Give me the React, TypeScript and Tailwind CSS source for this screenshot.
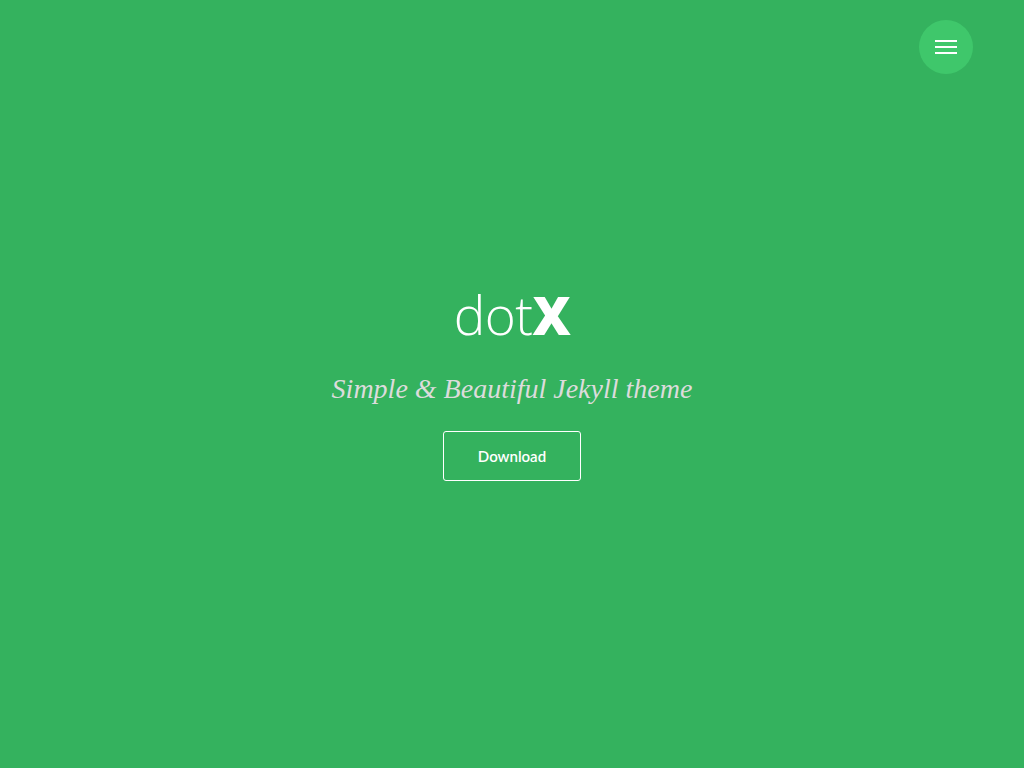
export default function App() {
  return (
    <div className="relative min-h-[768px] w-full bg-[#34b25e] flex flex-col items-center justify-center">
      <button
        aria-label="Menu"
        className="absolute top-[20px] right-[51px] w-[54px] h-[54px] rounded-full bg-[#3fc76b] flex flex-col items-center justify-center gap-[4px]"
      >
        <span className="block w-[22px] h-[2px] bg-white" />
        <span className="block w-[22px] h-[2px] bg-white" />
        <span className="block w-[22px] h-[2px] bg-white" />
      </button>

      <div className="flex flex-col items-center mt-[1px]">
        <h1 className="font-['Open_Sans',sans-serif] text-[53px] leading-none text-white tracking-[-0.01em]">
          <span className="font-light">dot</span>
          <span className="font-extrabold">X</span>
        </h1>
        <p className="mt-[34px] font-['Liberation_Serif',serif] italic text-[28px] leading-none text-[#dcdcdc]">
          Simple &amp; Beautiful Jekyll theme
        </p>
        <a
          href="#"
          className="mt-[28px] w-[138px] h-[50px] flex items-center justify-center border border-white rounded-[3px] text-white font-['Lato',sans-serif] font-semibold text-[15px] no-underline"
        >
          Download
        </a>
      </div>
    </div>
  )
}
